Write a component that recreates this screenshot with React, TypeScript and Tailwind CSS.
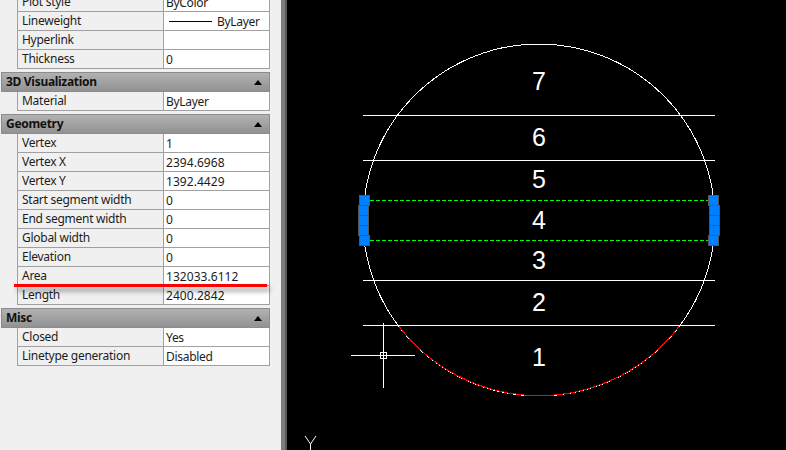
type RowData = { label: string; value?: string; line?: boolean };

function Row({ label, value, line }: RowData) {
  const isWord = value !== undefined && /[a-z]/i.test(value);
  return (
    <div className="flex h-[19px] border-b border-[#a0a0a0] text-[12px] leading-[17px] text-[#1c1c1c]">
      <div className="w-[146px] shrink-0 border-r border-[#a0a0a0] bg-[#f0f0f0] pl-[4px] tracking-[-0.27px]">{label}</div>
      <div className={`flex flex-1 items-center bg-white pt-px pl-[2px] ${isWord ? "tracking-[-0.3px]" : "tracking-[0.05px]"}`}>
        {line && <span className="mr-[5px] ml-[3px] h-px w-[43px] bg-black" />}
        {value}
      </div>
    </div>
  );
}

function Section({ title, rows }: { title?: string; rows: RowData[] }) {
  return (
    <section className="mb-[3px]">
      {title && (
        <header className="flex h-[20px] items-center justify-between border border-[#8c8c8c] bg-gradient-to-b from-[#b2b2b2] to-[#929292] pr-[7px] pl-[4px] text-[12px] font-bold tracking-[-0.3px] text-[#111]">
          <span>{title}</span>
          <svg width="8" height="5" viewBox="0 0 8 5"><path d="M4 0L8 5H0Z" fill="#000" /></svg>
        </header>
      )}
      <div className="ml-[16px] border-x border-[#a0a0a0]">
        {rows.map((r) => <Row key={r.label} {...r} />)}
      </div>
    </section>
  );
}

function Drawing() {
  const labels: [string, number][] = [["7", 90], ["6", 146], ["5", 188], ["4", 229], ["3", 269], ["2", 311], ["1", 366]];
  const grips = [
    [359, 195], [358, 205], [358, 215], [358, 225], [359, 235],
    [708, 195], [709, 205], [709, 215], [709, 225], [708, 235],
  ];
  return (
    <svg width="499" height="450" viewBox="287 0 499 450" className="block">
      <g shapeRendering="crispEdges">
        <circle cx="539" cy="220" r="176" fill="none" stroke="#fff" strokeWidth="1" />
        <path d="M398 325A176 176 0 0 0 680 325" fill="none" stroke="#f00" strokeWidth="1" />
        <path d="M363 115.5H715M363 160.5H715M363 280.5H715M363 325.5H715" stroke="#fff" />
        <path d="M370 200.5H708M370 240.5H708" stroke="#0f0" strokeDasharray="4 2" />
        <path d="M351 355.5H415M383.5 323V388" stroke="#fff" />
        <rect x="380.5" y="352.5" width="6" height="6" fill="none" stroke="#fff" />
        {grips.map(([x, y]) => (
          <rect key={`${x}-${y}`} x={x + 0.5} y={y + 0.5} width="10" height="10" fill="#0080ff" stroke="#555" />
        ))}
      </g>
      <path d="M305 436L310.5 444V450M316 436L310.5 444" fill="none" stroke="#fff" />
      {labels.map(([t, y]) => (
        <text key={t} x="539" y={y} textAnchor="middle" fill="#fff" fontSize="25" fontFamily="Liberation Sans, sans-serif">{t}</text>
      ))}
    </svg>
  );
}

export default function App() {
  return (
    <div className="flex h-[450px] w-[786px] overflow-hidden bg-black font-['Noto_Sans','Liberation_Sans',sans-serif]">
      <aside className="relative w-[281px] shrink-0 bg-[#f0f0f0] pr-[11px] pl-[1px]">
        <div className="-mt-[7px]">
          <Section
            rows={[
              { label: "Plot style", value: "ByColor" },
              { label: "Lineweight", value: "ByLayer", line: true },
              { label: "Hyperlink" },
              { label: "Thickness", value: "0" },
            ]}
          />
          <Section title="3D Visualization" rows={[{ label: "Material", value: "ByLayer" }]} />
          <Section
            title="Geometry"
            rows={[
              { label: "Vertex", value: "1" },
              { label: "Vertex X", value: "2394.6968" },
              { label: "Vertex Y", value: "1392.4429" },
              { label: "Start segment width", value: "0" },
              { label: "End segment width", value: "0" },
              { label: "Global width", value: "0" },
              { label: "Elevation", value: "0" },
              { label: "Area", value: "132033.6112" },
              { label: "Length", value: "2400.2842" },
            ]}
          />
          <Section
            title="Misc"
            rows={[
              { label: "Closed", value: "Yes" },
              { label: "Linetype generation", value: "Disabled" },
            ]}
          />
        </div>
        {/* red marker stroke over the Area row */}
        <div className="absolute top-[284px] left-[14px] h-[3px] w-[253px] bg-[#f00] shadow-[3px_4px_5px_rgba(0,0,0,0.45)]" />
      </aside>
      <div className="w-[4px] shrink-0 bg-[#7d7d7d]" />
      <div className="w-[2px] shrink-0 bg-[#5a5a5a]" />
      <Drawing />
    </div>
  );
}
